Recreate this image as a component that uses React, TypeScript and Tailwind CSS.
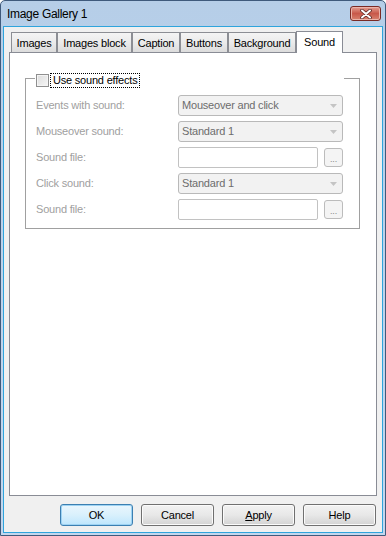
import React from 'react';

const font = "font-['Liberation_Sans',Arial,sans-serif]";

function Tab({ label, width, selected }: { label: string; width: number; selected?: boolean }) {
  if (selected) {
    return (
      <div
        style={{ width }}
        className="relative z-10 -mb-px h-[22px] flex justify-center pt-[2px] border border-b-0 border-[#898c95] bg-white text-black"
      >
        {label}
      </div>
    );
  }
  return (
    <div
      style={{ width }}
      className="h-[20px] flex items-center justify-center pt-[1px] border border-b-0 border-[#8c8e94] bg-gradient-to-b from-[#f4f4f4] via-[#ebebeb] to-[#dcdcdc] text-black"
    >
      {label}
    </div>
  );
}

function Combo({ value }: { value: string }) {
  return (
    <div className="w-[165px] h-[21px] flex items-center justify-between pl-[3px] pr-[5px] border border-[#b9b9b9] rounded-[3px] bg-[#f2f2f2] text-[#6d6d6d]">
      <span>{value}</span>
      <svg width="7" height="4" viewBox="0 0 7 4">
        <path d="M0 0 H7 L3.5 4 Z" fill="#c4c4c4" />
      </svg>
    </div>
  );
}

function FileField() {
  return (
    <div className="w-[165px] h-[21px] flex items-center justify-between">
      <div className="w-[140px] h-[21px] border border-[#c2c2c2] rounded-[2px] bg-white" />
      <div className="w-[19px] h-[19px] flex items-end justify-center pb-[2px] border border-[#bcbcbc] rounded-[3px] bg-[#f4f4f4] text-[9px] leading-none text-[#8a8a8a]">
        ...
      </div>
    </div>
  );
}

function Row({ label, children }: { label: string; children: React.ReactNode }) {
  return (
    <div className="h-[21px] flex items-center">
      <div className="w-[142px] text-[#a0a0a0]">{label}</div>
      {children}
    </div>
  );
}

function Btn({ children, primary }: { children: React.ReactNode; primary?: boolean }) {
  return (
    <div
      className={
        primary
          ? 'w-[73px] h-[22px] flex items-center justify-center rounded-[3px] border border-[#3c7fb1] bg-gradient-to-b from-[#eaf6fd] via-[#d9f0fc] to-[#bee6fd] text-black shadow-[inset_0_0_0_1px_#9ed3f3]'
          : 'w-[73px] h-[22px] flex items-center justify-center rounded-[3px] border border-[#707070] bg-gradient-to-b from-[#f2f2f2] via-[#e8e8e8] to-[#d3d3d3] text-black shadow-[inset_0_0_0_1px_#fbfbfb]'
      }
    >
      {children}
    </div>
  );
}

export default function App() {
  return (
    <div className={`${font} text-[11px] tracking-[-0.2px] w-[386px] h-[536px] flex flex-col bg-gradient-to-b from-[#b6cee8] to-[#c3d7ee] border border-[#3f5a7c] rounded-t-[5px] overflow-hidden`}>
      {/* Title bar */}
      <div className="h-[25px] flex items-center justify-between pl-[6px] pr-[4px]">
        <span className="text-[12px] text-black tracking-[-0.3px]">Image Gallery 1</span>
        <div className="w-[31px] h-[15px] flex items-center justify-center rounded-[3px] border border-[#7a2a24] bg-gradient-to-b from-[#e39e92] via-[#c8584a] to-[#d8826f] shadow-[inset_0_0_0_1px_#eab4aa]">
          <svg width="12" height="10" viewBox="0 0 12 10">
            <path d="M2 1.5 L10 8.5 M10 1.5 L2 8.5" stroke="#5a2a26" strokeWidth="3.6" strokeLinecap="round" />
            <path d="M2 1.5 L10 8.5 M10 1.5 L2 8.5" stroke="#ffffff" strokeWidth="2" strokeLinecap="round" />
          </svg>
        </div>
      </div>

      {/* Client area */}
      <div className="flex-1 mx-[2px] mb-[2px] flex flex-col pt-[4px] px-[5px] bg-[#f0f0f0] border border-[#2fa4dc]">
        <div className="h-[21px] flex items-end pl-[2px]">
          <Tab label="Images" width={46} />
          <Tab label="Images block" width={75} />
          <Tab label="Caption" width={48} />
          <Tab label="Buttons" width={48} />
          <Tab label="Background" width={68} />
          <Tab label="Sound" width={47} selected />
        </div>

        <div className="w-[368px] h-[444px] border border-[#898c95] bg-white pt-[25px] pl-[15px]">
          <div className="relative w-[335px] h-[151px] border border-[#a0a0a0] pt-[16px] pl-[10px] flex flex-col gap-[5px]">
            {/* legend over the border line */}
            <div className="absolute left-[9px] top-[-7px] w-[309px] h-[16px] flex items-center bg-white">
              <div className="ml-[1px] w-[13px] h-[13px] border border-[#8f8f8f] bg-gradient-to-br from-[#dcdcdc] to-[#f6f6f6] shadow-[inset_0_0_0_1px_#f4f4f4]" />
              <span className="ml-[1px] px-[2px] h-[15px] flex items-center border border-dotted border-black text-black">
                Use sound effects
              </span>
            </div>

            <Row label="Events with sound:">
              <Combo value="Mouseover and click" />
            </Row>
            <Row label="Mouseover sound:">
              <Combo value="Standard 1" />
            </Row>
            <Row label="Sound file:">
              <FileField />
            </Row>
            <Row label="Click sound:">
              <Combo value="Standard 1" />
            </Row>
            <Row label="Sound file:">
              <FileField />
            </Row>
          </div>
        </div>

        <div className="mt-[8px] flex justify-end gap-[8px] pr-[1px]">
          <Btn primary>OK</Btn>
          <Btn>Cancel</Btn>
          <Btn>
            <span>
              <span className="underline">A</span>pply
            </span>
          </Btn>
          <Btn>Help</Btn>
        </div>
      </div>
    </div>
  );
}
